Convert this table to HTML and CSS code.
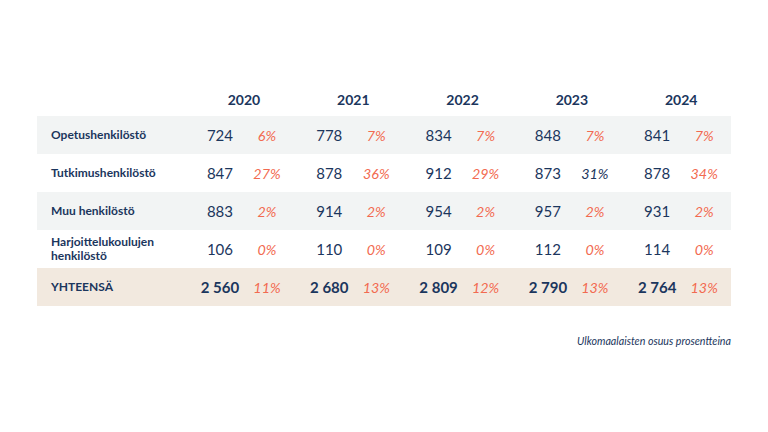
FILE: index.html
```html
<!DOCTYPE html>
<html lang="fi">
<head>
<meta charset="utf-8">
<link rel="stylesheet" href="styles.css">
</head>
<body>
<div class="page">
  <div class="table">
    <div class="row head">
      <div class="label"></div>
      <div class="grp"><div class="year">2020</div></div>
      <div class="grp"><div class="year">2021</div></div>
      <div class="grp"><div class="year">2022</div></div>
      <div class="grp"><div class="year">2023</div></div>
      <div class="grp"><div class="year">2024</div></div>
    </div>
    <div class="row grey">
      <div class="label">Opetushenkilöstö</div>
      <div class="grp"><span class="num">724</span><span class="pct">6%</span></div>
      <div class="grp"><span class="num">778</span><span class="pct">7%</span></div>
      <div class="grp"><span class="num">834</span><span class="pct">7%</span></div>
      <div class="grp"><span class="num">848</span><span class="pct">7%</span></div>
      <div class="grp"><span class="num">841</span><span class="pct">7%</span></div>
    </div>
    <div class="row">
      <div class="label">Tutkimushenkilöstö</div>
      <div class="grp"><span class="num">847</span><span class="pct">27%</span></div>
      <div class="grp"><span class="num">878</span><span class="pct">36%</span></div>
      <div class="grp"><span class="num">912</span><span class="pct">29%</span></div>
      <div class="grp"><span class="num">873</span><span class="pct navy">31%</span></div>
      <div class="grp"><span class="num">878</span><span class="pct">34%</span></div>
    </div>
    <div class="row grey">
      <div class="label">Muu henkilöstö</div>
      <div class="grp"><span class="num">883</span><span class="pct">2%</span></div>
      <div class="grp"><span class="num">914</span><span class="pct">2%</span></div>
      <div class="grp"><span class="num">954</span><span class="pct">2%</span></div>
      <div class="grp"><span class="num">957</span><span class="pct">2%</span></div>
      <div class="grp"><span class="num">931</span><span class="pct">2%</span></div>
    </div>
    <div class="row">
      <div class="label">Harjoittelukoulujen<br>henkilöstö</div>
      <div class="grp"><span class="num">106</span><span class="pct">0%</span></div>
      <div class="grp"><span class="num">110</span><span class="pct">0%</span></div>
      <div class="grp"><span class="num">109</span><span class="pct">0%</span></div>
      <div class="grp"><span class="num">112</span><span class="pct">0%</span></div>
      <div class="grp"><span class="num">114</span><span class="pct">0%</span></div>
    </div>
    <div class="row total">
      <div class="label">YHTEENSÄ</div>
      <div class="grp"><span class="num">2 560</span><span class="pct">11%</span></div>
      <div class="grp"><span class="num">2 680</span><span class="pct">13%</span></div>
      <div class="grp"><span class="num">2 809</span><span class="pct">12%</span></div>
      <div class="grp"><span class="num">2 790</span><span class="pct">13%</span></div>
      <div class="grp"><span class="num">2 764</span><span class="pct">13%</span></div>
    </div>
  </div>
  <div class="note">Ulkomaalaisten osuus prosentteina</div>
</div>
</body>
</html>
```
FILE: styles.css
```css
* { box-sizing: border-box; }
html, body { margin: 0; padding: 0; background: #ffffff; }
body {
  width: 768px;
  height: 432px;
  font-family: Lato, "Open Sans", sans-serif;
  color: #1b365d;
  overflow: hidden;
}
.page {
  padding: 82px 37px 0 37px;
  display: flex;
  flex-direction: column;
}
.table {
  width: 694px;
  display: flex;
  flex-direction: column;
}
.row {
  display: grid;
  grid-template-columns: 144.7px repeat(5, 94px);
  column-gap: 15.3px;
  height: 38px;
  align-items: center;
}
.row.head { height: 34px; }
.grey { background: #f2f4f4; }
.total { background: #f2e9df; }
.label {
  padding-left: 14px;
  font-size: 12px;
  font-weight: 700;
  line-height: 1.15;
  white-space: nowrap;
}
.grp {
  display: grid;
  grid-template-columns: 46px 48px;
  align-items: center;
}
.year {
  grid-column: 1 / 3;
  text-align: center;
  font-size: 14px;
  font-weight: 700;
}
.num {
  text-align: center;
  font-size: 15px;
  font-weight: 400;
}
.pct {
  text-align: center;
  font-size: 14.3px;
  font-style: italic;
  color: #f26a50;
}
.pct.navy { color: #1b365d; }
.total .num { font-weight: 700; }
.total .label { font-weight: 700; }
.note {
  width: 694px;
  margin-top: 28px;
  text-align: right;
  font-size: 10.7px;
  font-style: italic;
}
```
